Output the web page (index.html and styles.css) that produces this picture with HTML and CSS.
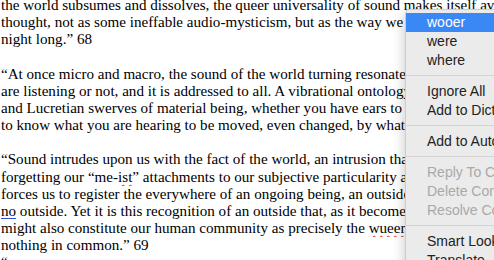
FILE: index.html
```html
<!DOCTYPE html>
<html lang="en">
<head>
    <meta charset="UTF-8">
    <title>Document with spelling menu</title>
    <link rel="stylesheet" href="styles.css">
</head>
<body>
    <div class="page">
        <div class="line">the world subsumes and dissolves, the queer universality of sound makes itself available to</div>
        <div class="line">thought, not as some ineffable audio-mysticism, but as the way we are in the world all</div>
        <div class="line">night long.” 68</div>
        <div class="line blank">&nbsp;</div>
        <div class="line">“At once micro and macro, the sound of the world turning resonates with us whether we</div>
        <div class="line">are listening or not, and it is addressed to all. A vibrational ontology of the atomic pulses</div>
        <div class="line">and Lucretian swerves of material being, whether you have ears to hear or not, you need not</div>
        <div class="line">to know what you are hearing to be moved, even changed, by what you hear.</div>
        <div class="line blank">&nbsp;</div>
        <div class="line">“Sound intrudes upon us with the fact of the world, an intrusion that, in reminding us and</div>
        <div class="line">forgetting our “me-<span class="spell">ist</span>” attachments to our subjective particularity and individualism,</div>
        <div class="line">forces us to register the everywhere of an ongoing being, an outside that, in the end, has</div>
        <div class="line"><span class="grammar">no</span> outside. Yet it is this recognition of an outside that, as it becomes ours, we may find</div>
        <div class="line">might also constitute our human community as precisely the <span class="spell">wueer</span> community of those who have</div>
        <div class="line">nothing in common.” 69</div>
        <div class="line">“</div>
    </div>

    <div class="menu">
        <div class="item active">wooer</div>
        <div class="item">were</div>
        <div class="item">where</div>
        <div class="sep"></div>
        <div class="item">Ignore All</div>
        <div class="item">Add to Dictionary</div>
        <div class="sep"></div>
        <div class="item">Add to AutoCorrect</div>
        <div class="sep"></div>
        <div class="item disabled">Reply To Comment</div>
        <div class="item disabled">Delete Comment</div>
        <div class="item disabled">Resolve Comment</div>
        <div class="sep"></div>
        <div class="item">Smart Lookup</div>
        <div class="item">Translate</div>
    </div>
</body>
</html>
```

FILE: styles.css
```css
body {
    margin: 0;
    background: #fff;
    overflow: hidden;
    height: 260px;
}

.page {
    margin-top: -3px;
    padding-left: 1px;
    font-family: "Liberation Serif", "Times New Roman", serif;
    font-size: 15.1px;
    line-height: 17.15px;
    color: #000;
}

.line {
    white-space: nowrap;
    overflow: hidden;
}

.spell {
    text-decoration: underline wavy #e0302a;
    text-decoration-thickness: 1px;
    text-underline-offset: 2px;
}

.grammar {
    text-decoration: underline double #2b54d8;
    text-decoration-thickness: 1px;
    text-underline-offset: 2px;
}

.menu {
    position: absolute;
    top: 9px;
    left: 405px;
    width: 170px;
    padding: 3px 0 6px;
    background: #ebebeb;
    border: 1px solid #cdcdcd;
    border-right: none;
    border-radius: 5px 0 0 5px;
    box-shadow: -2px 4px 12px rgba(0, 0, 0, 0.18);
    font-family: "Liberation Sans", Arial, sans-serif;
    font-size: 14px;
    color: #222;
}

.item {
    height: 19px;
    line-height: 19px;
    padding-left: 21px;
    white-space: nowrap;
}

.item.active {
    background: #3a87f6;
    color: #fff;
}

.item.disabled {
    color: #a9a9a9;
}

.sep {
    height: 1px;
    margin: 5px 0 6px;
    background: #d4d4d4;
}
```
